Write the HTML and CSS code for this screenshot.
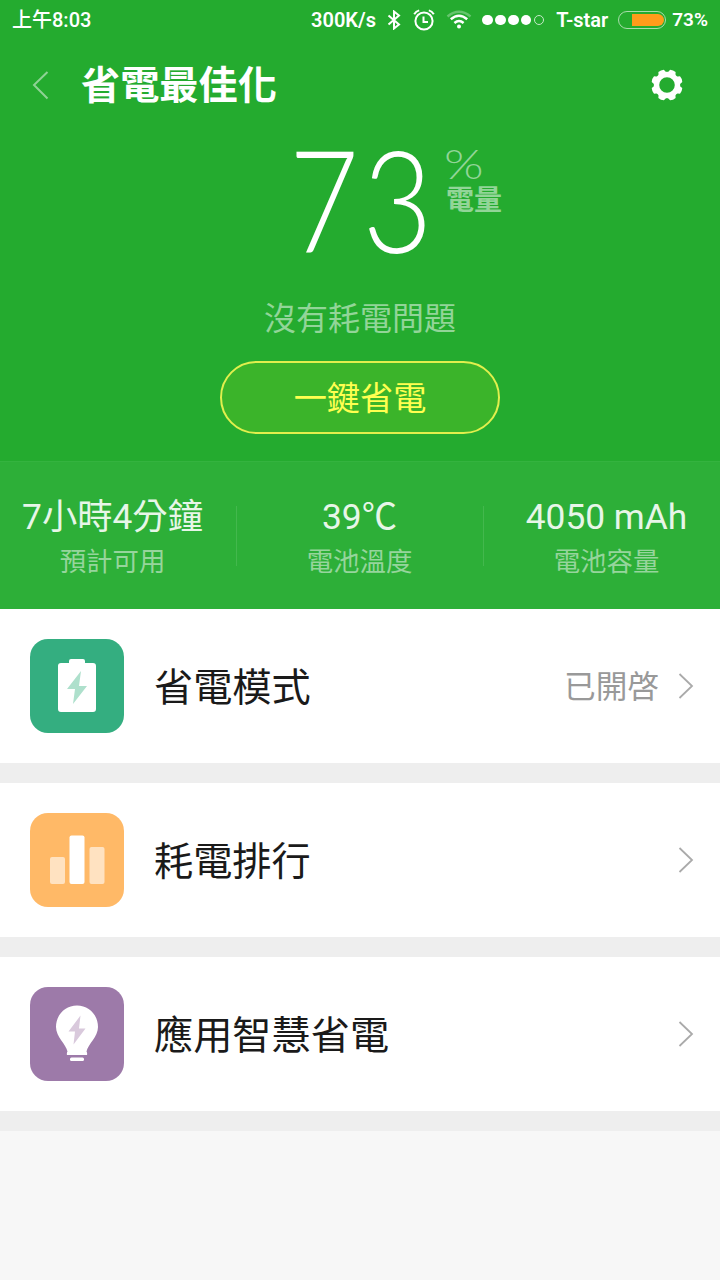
FILE: index.html
```html
<!DOCTYPE html>
<html lang="zh-Hant">
<head>
  <meta charset="UTF-8">
  <title>省電最佳化</title>
  <link rel="stylesheet" href="styles.css">
</head>
<body>

  <div class="header">
    <!-- status bar -->
    <div class="status">
      <span class="time">上午8:03</span>
      <span class="speed">300K/s</span>
      <svg class="bluetooth" width="14" height="20" viewBox="0 0 14 20"><path d="M1.5 5.5L12 14.5L7 18.5V1.5L12 5.5L1.5 14.5"/></svg>
      <svg class="alarm" width="22" height="22" viewBox="0 0 22 22"><circle cx="11" cy="12" r="8.6"/><path d="M10.5 7.5V13H15M1.2 5.2Q3 2.2 6.2 1.4M20.8 5.2Q19 2.2 15.8 1.4"/></svg>
      <svg class="wifi" width="26" height="20" viewBox="0 0 26 20"><path class="weak" d="M1.5 6.5Q13 -3 24.5 6.5"/><path d="M4.8 9.3Q13 2.3 21.2 9.3M8.4 13Q13 9 17.6 13"/><circle cx="13" cy="16.5" r="2"/></svg>
      <div class="signal"><i></i><i></i><i></i><i></i><i class="off"></i></div>
      <span class="carrier">T-star</span>
      <div class="battery"><div class="level"></div></div>
      <span class="percent">73%</span>
    </div>

    <!-- title bar -->
    <div class="titlebar">
      <svg class="back" width="18" height="30" viewBox="0 0 18 30"><path d="M15.5 2L2 15L15.5 28.5"/></svg>
      <h1>省電最佳化</h1>
      <svg class="gear" width="32" height="32" viewBox="-16 -16 32 32">
        <defs><path id="tooth" d="M-4.6 -11.5Q-3.6 -13 -3 -15.3Q0 -16.4 3 -15.3Q3.6 -13 4.6 -11.5Z"/></defs>
        <circle r="10.5"/>
        <use href="#tooth" transform="rotate(22.5)"/>
        <use href="#tooth" transform="rotate(67.5)"/>
        <use href="#tooth" transform="rotate(112.5)"/>
        <use href="#tooth" transform="rotate(157.5)"/>
        <use href="#tooth" transform="rotate(202.5)"/>
        <use href="#tooth" transform="rotate(247.5)"/>
        <use href="#tooth" transform="rotate(292.5)"/>
        <use href="#tooth" transform="rotate(337.5)"/>
      </svg>
    </div>

    <!-- battery level -->
    <div class="charge">
      <div class="number">73</div>
      <div class="unit">
        <span class="sign">%</span>
        <span class="name">電量</span>
      </div>
    </div>
    <p class="message">沒有耗電問題</p>
    <button class="save">一鍵省電</button>

    <div class="stats">
      <div class="stat"><b>7小時4分鐘</b><span>預計可用</span></div>
      <div class="stat"><b>39℃</b><span>電池溫度</span></div>
      <div class="stat"><b>4050 mAh</b><span>電池容量</span></div>
    </div>
  </div>

  <div class="list">
    <div class="row">
      <svg class="icon green" width="94" height="94" viewBox="0 0 94 94">
        <path fill="#fff" d="M39 24V22Q39 20 41 20H53Q55 20 55 22V24H63Q66 24 66 27V70Q66 73 63 73H31Q28 73 28 70V27Q28 24 31 24Z"/>
        <path fill="#aee0cc" d="M51 32L37 50H45L43 65L57 47H49Z"/>
      </svg>
      <span class="label">省電模式</span>
      <span class="value">已開啓</span>
      <svg class="arrow" width="16" height="28" viewBox="0 0 16 28"><path d="M1.5 2L14 14L1.5 26"/></svg>
    </div>
    <div class="row">
      <svg class="icon orange" width="94" height="94" viewBox="0 0 94 94">
        <rect fill="#ffe2c1" x="20" y="44" width="15" height="27" rx="2"/>
        <rect fill="#fff" x="39.5" y="22.500" width="15" height="48.500" rx="2"/>
        <rect fill="#ffe2c1" x="59.5" y="34" width="15" height="37" rx="2"/>
      </svg>
      <span class="label">耗電排行</span>
      <svg class="arrow" width="16" height="28" viewBox="0 0 16 28"><path d="M1.5 2L14 14L1.5 26"/></svg>
    </div>
    <div class="row">
      <svg class="icon purple" width="94" height="94" viewBox="0 0 94 94">
        <path fill="#fff" d="M47 18.500C59 18.500 68 28 68 40C68 50 58 57 56.500 64.500Q57.500 66 57 68H37Q36.500 66 37.500 64.500C36 57 26 50 26 40C26 28 35 18.500 47 18.500Z"/>
        <rect fill="#fff" x="40" y="70.500" width="14" height="3.500" rx="1.500"/>
        <path fill="#d9c9dc" d="M50.500 28.500L38.500 44.500H45L43.500 57.500L55.500 41.500H49Z"/>
      </svg>
      <span class="label">應用智慧省電</span>
      <svg class="arrow" width="16" height="28" viewBox="0 0 16 28"><path d="M1.5 2L14 14L1.5 26"/></svg>
    </div>
  </div>

</body>
</html>
```
FILE: styles.css
```css
* { box-sizing: border-box; }
body { margin: 0; background: #f7f7f7; font-family: Roboto, "Noto Sans CJK TC", sans-serif; }
svg { flex: none; display: block; }
.header { height: 609px; background: #24ab2f; color: #fff; display: flex; flex-direction: column; }

.status { height: 40px; display: flex; align-items: center; padding: 0 12px; font-size: 20px; font-weight: 600; line-height: 40px; white-space: nowrap; }
.time { font-weight: 500; }
.speed { margin-left: auto; }
.status svg { fill: none; stroke: #fff; stroke-width: 2; }
.bluetooth { margin-left: 11px; }
.alarm { margin-left: 12px; }
.wifi { margin-left: 11px; }
.status .wifi path { stroke-width: 2.5; }
.wifi .weak { opacity: 0.3; }
.wifi circle { fill: #fff; stroke: none; }
.signal { display: flex; gap: 2.200px; margin-left: 10.500px; }
.signal i { width: 10.600px; height: 10.600px; border-radius: 50%; background: #fff; }
.signal .off { background: none; border: 1px solid #c5e9c8; }
.carrier { margin-left: 12px; }
.battery { width: 48px; height: 18px; margin: 0 6px 0 10px; padding: 2px 1px; border: 1.500px solid #a8dcac; border-radius: 9px; }
.level { width: 32px; height: 100%; margin-left: auto; background: #ff9c1a; border-radius: 0 7px 7px 0; }
.percent { font-size: 19px; }

.titlebar { height: 90px; display: flex; align-items: center; padding: 0 37px 0 32px; }
.titlebar h1 { margin: 2px auto 0 31px; font-size: 39.200px; line-height: 60px; font-weight: 700; }
.back path { fill: none; stroke: #8fd295; stroke-width: 2; }
.gear > circle { fill: none; stroke: #fff; stroke-width: 5.4; }
.gear path { fill: #fff; }

.charge { height: 160px; display: flex; justify-content: flex-start; padding-left: 289px; }
.number { width: 155px; font-family: Lato, sans-serif; font-weight: 300; font-size: 142px; line-height: 136px; letter-spacing: 4px; transform: scaleX(0.85); transform-origin: left; }
.unit { display: flex; flex-direction: column; padding-top: 14px; color: #92d598; }
.sign { width: 32px; font-family: Lato, sans-serif; font-weight: 300; font-size: 41px; line-height: 39px; transform: scaleX(1.24); transform-origin: left; }
.name { margin: 4px 0 0 2px; font-size: 28px; line-height: 28px; font-weight: 700; }
.message { height: 46px; margin: 6px 0 19px; font-size: 32px; line-height: 46px; text-align: center; color: #92d598; font-weight: 400; }
.save { width: 280px; height: 73px; margin: 0 auto; padding: 2px 0 0; border: 2px solid #e1ef4d; border-radius: 37px; background: #3bb42a; color: #ffff50; font: 400 33.200px/67px Roboto, "Noto Sans CJK TC", sans-serif; }

.stats { height: 148px; margin-top: auto; padding-top: 30px; display: grid; grid-template-columns: 247px 247px 247px; justify-content: center; overflow: hidden; background: #2daf38; border-top: 1px solid #34b33f; }
.stat { margin-left: -1px; text-align: center; }
.stat b, .stat span { display: block; }
.stat b { font-size: 35.300px; line-height: 50px; font-weight: 400; color: #e7f6e8; }
.stat span { font-size: 26.400px; line-height: 40px; font-weight: 400; color: #96d59c; }
.stat + .stat { background: linear-gradient(#43b84d, #43b84d) 0 14px / 1px 60px no-repeat; }

.row { height: 174px; padding: 0 26px 0 30px; display: flex; align-items: center; background: #fff; border-bottom: 20px solid #eee; }
.icon { border-radius: 18px; }
.green { background: #34ae80; }
.orange { background: #ffb967; }
.purple { background: #9d7aa9; }
.label { margin: -5px auto 0 30px; font-size: 39.200px; color: #1a1a1a; }
.value { margin: -4px 19px 0 0; font-size: 31.700px; color: #999; }
.arrow path { fill: none; stroke: #aaa; stroke-width: 1.800; }
```
